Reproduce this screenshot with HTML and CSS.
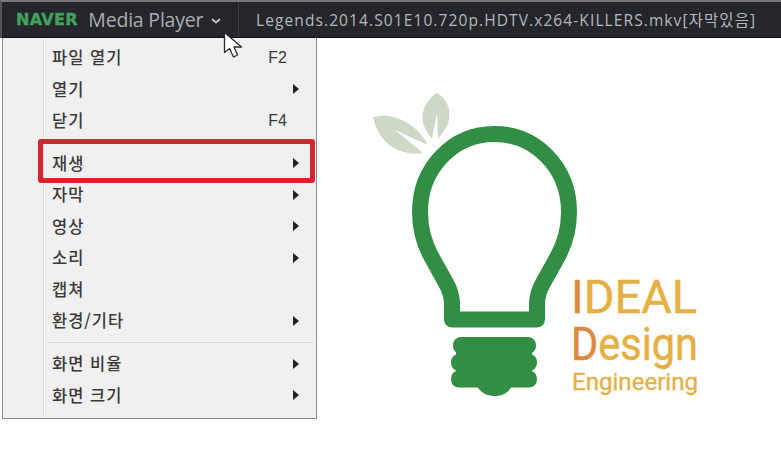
FILE: index.html
```html
<!DOCTYPE html>
<html lang="ko">
<head>
<meta charset="utf-8">
<title>NAVER Media Player</title>
<link rel="stylesheet" href="styles.css">
</head>
<body>
<header class="topbar">
  <div class="brand">
    <span class="naver">NAVER</span>
    <span class="product">Media Player</span>
    <svg class="chevron" width="10" height="6" viewBox="0 0 10 6"><path d="M1 1l4 3.600L9 1" fill="none" stroke="#c4c8ca" stroke-width="1.700"/></svg>
  </div>
  <div class="filename">Legends.2014.S01E10.720p.HDTV.x264-KILLERS.mkv[자막있음]</div>
  <svg class="cursor" width="22" height="28" viewBox="0 0 22 28"><path d="M1.500 1.500V21.500L6.500 17.500L10.500 26L14.500 24L11 16H18.500Z" fill="#fff" stroke="#2b2b2b" stroke-width="1.300" stroke-linejoin="round"/></svg>
</header>
<main class="content">
  <nav class="menu">
    <div class="item"><span>파일 열기</span><span class="key">F2</span></div>
    <div class="item"><span>열기</span><i class="arrow"></i></div>
    <div class="item"><span>닫기</span><span class="key">F4</span></div>
    <div class="sep"></div>
    <div class="item active"><span>재생</span><i class="arrow"></i></div>
    <div class="item"><span>자막</span><i class="arrow"></i></div>
    <div class="item"><span>영상</span><i class="arrow"></i></div>
    <div class="item"><span>소리</span><i class="arrow"></i></div>
    <div class="item"><span>캡쳐</span></div>
    <div class="item"><span>환경/기타</span><i class="arrow"></i></div>
    <div class="sep line"></div>
    <div class="item"><span>화면 비율</span><i class="arrow"></i></div>
    <div class="item"><span>화면 크기</span><i class="arrow"></i></div>
  </nav>
  <svg class="logo" width="360" height="325" viewBox="360 85 360 325">
    <path class="leaf" d="M373 117C392 112 416 122 428 145L395 130L423 153C402 156 379 146 373 117Z"/>
    <path class="leaf" d="M437 93C446 98 451 108 449 119C448 127 442 133 438 139L437 113L432 139C425 130 421 122 423 112C425 104 431 96 437 93Z"/>
    <path class="bulb" d="M494.500 134C453 134 420 168 420 212C420 228 424 243 431 256L446 283C450 290 452 296 452 304V319.500H537V304C537 296 539 290 543 283L558 256C565 243 569 228 569 212C569 168 536 134 494.500 134Z"/>
    <rect class="base" x="453" y="337" width="83" height="17" rx="8"/>
    <rect class="base" x="451" y="354" width="86" height="17" rx="8"/>
    <rect class="base" x="451" y="370.500" width="86" height="17" rx="8"/>
    <rect class="base" x="456" y="340" width="76" height="45"/>
    <path class="base" d="M477 386H512C509 392 503 396 494.500 396C486 396 480 392 477 386Z"/>
    <text class="logo-big" x="571" y="313" textLength="126" lengthAdjust="spacingAndGlyphs"><tspan class="accent">I</tspan>DEAL</text>
    <text class="logo-big" x="571" y="360" textLength="127" lengthAdjust="spacingAndGlyphs"><tspan class="accent">D</tspan>esign</text>
    <text class="logo-small" x="572" y="390" textLength="126" lengthAdjust="spacingAndGlyphs">Engineering</text>
  </svg>
</main>
</body>
</html>
```
FILE: styles.css
```css
html, body {
  margin: 0;
  padding: 0;
  height: 459px;
  overflow: hidden;
  background: #fff;
}
body {
  font-family: "Noto Sans CJK KR", "Noto Sans", sans-serif;
}
.topbar {
  position: relative;
  box-sizing: border-box;
  height: 38px;
  display: flex;
  align-items: center;
  background: #24262b;
  border-top: 2px solid #77787a;
  border-left: 2px solid #55565a;
  border-bottom: 1px solid #111;
}
.brand {
  box-sizing: border-box;
  width: 237px;
  height: 100%;
  display: flex;
  align-items: center;
  padding-left: 14px;
  border-right: 1px solid #3a3c40;
}
.naver {
  font-family: "DejaVu Sans", sans-serif;
  font-weight: 700;
  font-size: 16px;
  letter-spacing: 0.300px;
  color: #3fa35b;
  -webkit-text-stroke: 0.400px #3fa35b;
}
.product {
  margin-left: 10.500px;
  font-family: "Open Sans", sans-serif;
  font-size: 19.500px;
  letter-spacing: -0.200px;
  color: #a9aeb0;
}
.chevron {
  margin-left: 8px;
  margin-top: 3px;
}
.filename {
  margin-left: 17px;
  font-family: "Open Sans", "Noto Sans CJK KR", sans-serif;
  font-size: 15.500px;
  letter-spacing: 1.100px;
  color: #b4b8bb;
  white-space: nowrap;
}
.cursor {
  position: absolute;
  left: 221px;
  top: 29px;
  z-index: 3;
}
.content {
  display: flex;
  align-items: flex-start;
}
.menu {
  box-sizing: border-box;
  width: 315px;
  height: 381px;
  margin-left: 2px;
  padding: 4px 2px 0 1px;
  background: linear-gradient(to right, #f0f0f0 40px, #dcdcdc 40px, #dcdcdc 41px, #fafafa 41px, #fafafa 42px, #f0f0f0 42px);
  border: 1px solid #8c8c8c;
  border-top: 0;
}
.item {
  position: relative;
  box-sizing: border-box;
  height: 31.500px;
  display: flex;
  align-items: center;
  justify-content: space-between;
  padding: 0 15px 1px 48px;
  font-size: 16.500px;
  font-weight: 500;
  letter-spacing: 1px;
  color: #3a3a3a;
}
.key {
  margin-right: 12px;
  margin-top: 1px;
  font-family: "Liberation Sans", sans-serif;
  font-size: 16px;
  font-weight: 400;
  letter-spacing: 0;
}
.arrow {
  width: 0;
  height: 0;
  margin-top: 1px;
  border-left: 6px solid #222;
  border-top: 5px solid transparent;
  border-bottom: 5px solid transparent;
}
.sep {
  height: 11px;
  margin-left: 43px;
}
.sep.line {
  box-sizing: border-box;
  height: 11.500px;
  padding-top: 5px;
  background: linear-gradient(#dadada, #dadada) 0 5px / 100% 1px no-repeat;
}
.active::after {
  content: "";
  position: absolute;
  left: 34px;
  right: -1px;
  top: -9px;
  bottom: -4px;
  border: 5px solid #d9232e;
  border-radius: 3px;
  box-sizing: border-box;
}
.logo {
  display: block;
  margin-left: 43px;
  margin-top: 47px;
}
.leaf {
  fill: #ccd9c6;
}
.bulb {
  fill: none;
  stroke: #328d45;
  stroke-width: 16;
  stroke-linejoin: round;
}
.base {
  fill: #328d45;
}
.logo-big {
  font-family: "Roboto", sans-serif;
  font-size: 47px;
  font-weight: 400;
  fill: #e4b044;
  stroke: #e4b044;
  stroke-width: 0.500;
}
.logo-small {
  font-family: "Roboto", sans-serif;
  font-size: 24px;
  font-weight: 400;
  fill: #e4b044;
  stroke: #e4b044;
  stroke-width: 0.300;
}
.accent {
  fill: #dd8a3f;
  stroke: #dd8a3f;
}
```
